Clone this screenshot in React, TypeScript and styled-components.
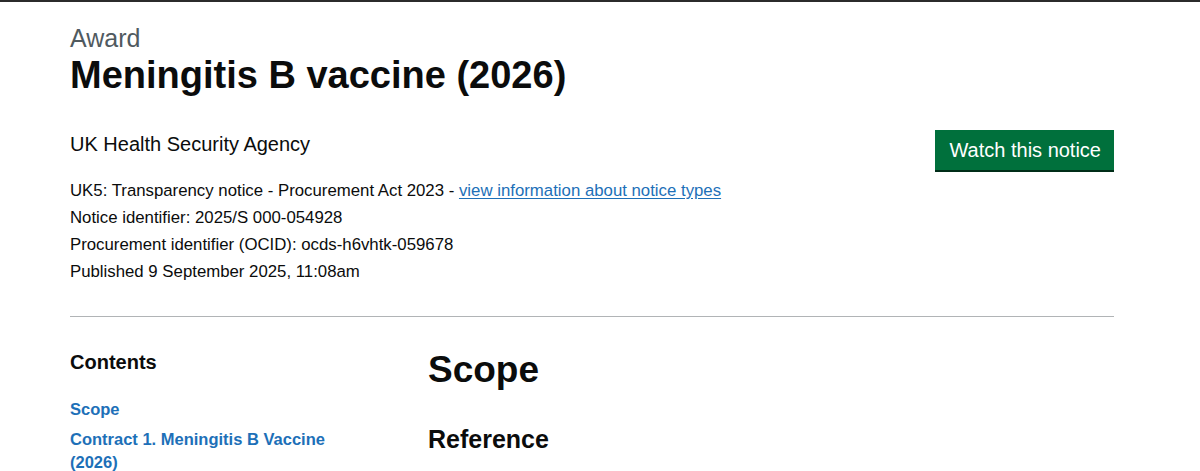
import React from 'react';
import styled, { createGlobalStyle } from 'styled-components';

const GlobalStyle = createGlobalStyle`
  html, body {
    margin: 0;
    padding: 0;
    background: #ffffff;
  }
  body {
    font-family: "Liberation Sans", Arial, sans-serif;
    color: #0b0c0c;
    border-top: 2px solid #2b2b2b;
  }
`;

const Container = styled.main`
  margin: 0 86px 0 70px;
  padding-top: 22px;
`;

const Caption = styled.span`
  display: block;
  font-size: 25px;
  line-height: 28px;
  color: #505a5f;
`;

const Title = styled.h1`
  margin: 0;
  font-size: 38px;
  line-height: 46px;
  font-weight: 700;
`;

const HeaderRow = styled.div`
  display: flex;
  justify-content: space-between;
  align-items: flex-start;
  margin-top: 30px;
`;

const Organisation = styled.p`
  margin: 0;
  font-size: 20px;
  line-height: 28px;
  padding-top: 2px;
`;

const WatchButton = styled.button`
  margin-top: 2px;
  font-family: inherit;
  font-size: 20px;
  line-height: 20px;
  color: #ffffff;
  background: #00703c;
  border: 0;
  border-radius: 0;
  box-shadow: 0 2px 0 #002d18;
  padding: 10px 13px 10px 14px;
  cursor: pointer;
`;

const Meta = styled.div`
  margin-top: 7px;
`;

const MetaLine = styled.p`
  margin: 0;
  font-size: 16.8px;
  line-height: 27px;
`;

const Link = styled.a`
  color: #1d70b8;
  text-decoration: underline;
  text-underline-offset: 2px;
`;

const Rule = styled.hr`
  border: 0;
  border-top: 1px solid #b1b4b6;
  margin: 31px 0 0;
`;

const GridRow = styled.div`
  display: grid;
  grid-template-columns: 1fr 2fr;
  margin: 0 -15px;
  padding-top: 30px;
`;

const Column = styled.div`
  padding: 0 15px;
`;

const ContentsTitle = styled.h2`
  margin: 0;
  padding-top: 3px;
  font-size: 20px;
  line-height: 24px;
  font-weight: 700;
`;

const ContentsList = styled.ul`
  list-style: none;
  margin: 24px 0 0;
  padding: 0 30px 0 0;
`;

const ContentsItem = styled.li`
  margin-bottom: 7px;
  font-size: 16.5px;
  line-height: 23px;
  font-weight: 700;
`;

const ContentsLink = styled.a`
  color: #1d70b8;
  text-decoration: none;
`;

const SectionTitle = styled.h2`
  margin: 0;
  padding-top: 1px;
  font-size: 37px;
  line-height: 44px;
  font-weight: 700;
`;

const SubTitle = styled.h3`
  margin: 32px 0 0;
  font-size: 25px;
  line-height: 30px;
  font-weight: 700;
`;

const contents = ['Scope', 'Contract 1. Meningitis B Vaccine (2026)'];

export default function App() {
  return (
    <>
      <GlobalStyle />
      <Container>
        <Caption>Award</Caption>
        <Title>Meningitis B vaccine (2026)</Title>

        <HeaderRow>
          <Organisation>UK Health Security Agency</Organisation>
          <WatchButton type="button">Watch this notice</WatchButton>
        </HeaderRow>

        <Meta>
          <MetaLine>
            UK5: Transparency notice - Procurement Act 2023 -{' '}
            <Link href="#">view information about notice types</Link>
          </MetaLine>
          <MetaLine>Notice identifier: 2025/S 000-054928</MetaLine>
          <MetaLine>Procurement identifier (OCID): ocds-h6vhtk-059678</MetaLine>
          <MetaLine>Published 9 September 2025, 11:08am</MetaLine>
        </Meta>

        <Rule />

        <GridRow>
          <Column>
            <ContentsTitle>Contents</ContentsTitle>
            <ContentsList>
              {contents.map((item) => (
                <ContentsItem key={item}>
                  <ContentsLink href="#">{item}</ContentsLink>
                </ContentsItem>
              ))}
            </ContentsList>
          </Column>
          <Column>
            <SectionTitle>Scope</SectionTitle>
            <SubTitle>Reference</SubTitle>
          </Column>
        </GridRow>
      </Container>
    </>
  );
}
